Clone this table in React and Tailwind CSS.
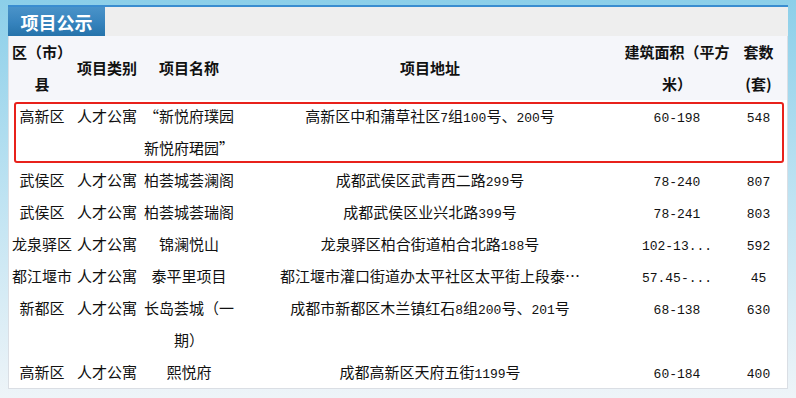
const rows = [
  { district: '高新区', type: '人才公寓', name: ['“新悦府璞园', '新悦府珺园”'], addr: '高新区中和蒲草社区7组100号、200号', area: '60-198', count: '548', marked: true },
  { district: '武侯区', type: '人才公寓', name: ['柏荟城荟澜阁'], addr: '成都武侯区武青西二路299号', area: '78-240', count: '807' },
  { district: '武侯区', type: '人才公寓', name: ['柏荟城荟瑞阁'], addr: '成都武侯区业兴北路399号', area: '78-241', count: '803' },
  { district: '龙泉驿区', type: '人才公寓', name: ['锦澜悦山'], addr: '龙泉驿区柏合街道柏合北路188号', area: '102-13...', count: '592' },
  { district: '都江堰市', type: '人才公寓', name: ['泰平里项目'], addr: '都江堰市灌口街道办太平社区太平街上段泰…', area: '57.45-...', count: '45' },
  { district: '新都区', type: '人才公寓', name: ['长岛荟城（一', '期）'], addr: '成都市新都区木兰镇红石8组200号、201号', area: '68-138', count: '630' },
  { district: '高新区', type: '人才公寓', name: ['熙悦府'], addr: '成都高新区天府五街1199号', area: '60-184', count: '400' },
];

const cols = 'grid grid-cols-[60px_70px_94px_388px_106px_57px]';
const mono = "font-['Liberation_Mono',monospace] text-[13px] leading-none";

// digits in the address get the narrow mono face
const Addr = ({ text }) => (
  <>
    {text.split(/(\d+)/).map((part, i) =>
      /^\d+$/.test(part) ? (
        <span key={i} className={mono}>{part}</span>
      ) : (
        <span key={i}>{part}</span>
      )
    )}
  </>
);

export default function App() {
  return (
    <div className="min-h-[398px] w-[796px] bg-[linear-gradient(to_bottom,#8ccfe9_0%,#bfe3f2_50%,#eef4f8_100%)] px-[8px] pt-[5px] font-['Noto_Sans_CJK_SC',sans-serif] text-[15px] text-[#111]">
      <div className="w-[780px] border-t-2 border-[#3a8dd0]">
        {/* tab strip */}
        <div className="flex h-[29px] bg-[#eeeeee]">
          <div className="flex w-[97px] items-center justify-center bg-[linear-gradient(to_bottom,#4a93c9,#3683bd_55%,#2673aa)] text-[18px] font-bold leading-none text-white">
            项目公示
          </div>
        </div>

        <div className="border-x border-b border-[#dadee4] bg-white">
          {/* header */}
          <div className={`${cols} bg-[#f5f6fa] pl-[3px] font-bold leading-[32px]`}>
            <div className="text-center">区（市）<br />县</div>
            <div className="flex items-center justify-center">项目类别</div>
            <div className="flex items-center justify-center">项目名称</div>
            <div className="flex items-center justify-center">项目地址</div>
            <div className="text-center">建筑面积（平方<br />米）</div>
            <div className="text-center">套数<br />(套)</div>
          </div>

          {/* body */}
          {rows.map((r, i) => (
            <div key={i} className={`${cols} relative pl-[3px] leading-[32px]`}>
              <div className="h-[32px] whitespace-nowrap text-center">{r.district}</div>
              <div className="h-[32px] whitespace-nowrap text-center">{r.type}</div>
              <div className="whitespace-nowrap text-center">
                {r.name.map((n, j) => (
                  <div key={j} className="h-[32px]">{n}</div>
                ))}
              </div>
              <div className="h-[32px] whitespace-nowrap text-center"><Addr text={r.addr} /></div>
              <div className="h-[32px] text-center"><span className={mono}>{r.area}</span></div>
              <div className="h-[32px] text-center"><span className={mono}>{r.count}</span></div>
              {r.marked && (
                <div className="pointer-events-none absolute top-[2px] bottom-[1px] left-[5px] right-[3px] rounded-[3px] border-[2.5px] border-[#e8211b]" />
              )}
            </div>
          ))}
        </div>
      </div>
    </div>
  );
}
